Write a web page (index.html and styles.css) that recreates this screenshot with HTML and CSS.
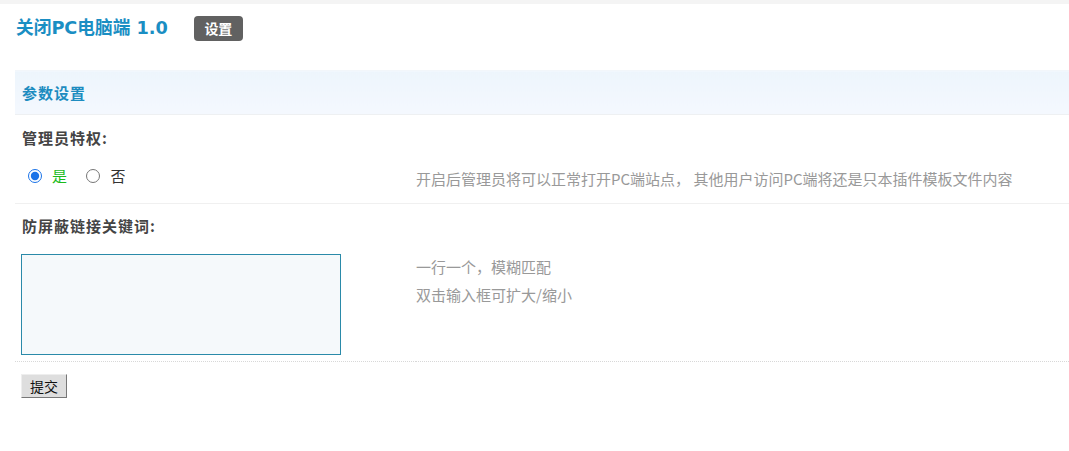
FILE: index.html
```html
<!DOCTYPE html>
<html lang="zh-CN">
<head>
<meta charset="utf-8">
<title>关闭PC电脑端 1.0</title>
<link rel="stylesheet" href="styles.css">
</head>
<body>
<div class="topbar"></div>
<div class="page">
  <div class="titlebar">
    <h3 class="title">关闭PC电脑端 1.0</h3>
    <span class="badge">设置</span>
  </div>
  <form class="form">
    <table class="tb">
      <colgroup><col class="c1"><col></colgroup>
      <tr class="head"><th colspan="2">参数设置</th></tr>
      <tr><td colspan="2" class="label">管理员特权:</td></tr>
      <tr class="val solid">
        <td class="field">
          <label class="radio on"><input type="radio" name="admin" checked> 是</label>
          <label class="radio"><input type="radio" name="admin"> 否</label>
        </td>
        <td class="tips">开启后管理员将可以正常打开PC端站点， 其他用户访问PC端将还是只本插件模板文件内容</td>
      </tr>
      <tr><td colspan="2" class="label label2">防屏蔽链接关键词:</td></tr>
      <tr class="val dotted">
        <td class="field-ta"><textarea class="tarea"></textarea></td>
        <td class="tips tips-top">一行一个，模糊匹配<br>双击输入框可扩大/缩小</td>
      </tr>
      <tr><td colspan="2" class="submit"><button type="button" class="btn">提交</button></td></tr>
    </table>
  </form>
</div>
</body>
</html>
```

FILE: styles.css
```css
html, body {
  margin: 0;
  padding: 0;
  background: #fff;
}
body {
  font-family: "Noto Sans CJK SC", "DejaVu Sans", sans-serif;
  font-size: 15px;
  color: #333;
}
.topbar {
  height: 4px;
  background: #f4f4f4;
}
.page {
  padding-left: 15px;
}
.titlebar {
  display: flex;
  align-items: center;
  height: 48px;
}
.title {
  margin: 0 0 0 1px;
  font-family: "DejaVu Sans", "Noto Sans CJK SC", sans-serif;
  font-size: 17.7px;
  font-weight: 700;
  color: #1a8ec3;
  line-height: 20px;
}
.badge {
  margin-left: 26px;
  width: 49px;
  height: 25px;
  line-height: 25px;
  text-align: center;
  background: #616161;
  color: #fff;
  font-weight: 700;
  font-size: 14px;
  border-radius: 4px;
}
.form {
  margin-top: 18px;
}
.tb {
  width: 100%;
  table-layout: fixed;
  border-collapse: collapse;
}
.tb .c1 {
  width: 401px;
}
.tb td, .tb th {
  padding: 0;
  text-align: left;
  vertical-align: top;
}
.tb .head th {
  height: 43px;
  padding-left: 7px;
  vertical-align: middle;
  background: linear-gradient(#edf5fc, #f4f8fe);
  border-top: 1px solid #f2f6fa;
  border-bottom: 1px solid #eef0f2;
  color: #1d8cc0;
  font-size: 15px;
  letter-spacing: 1px;
  font-weight: 700;
}
.tb .label {
  padding: 13px 0 5px 7px;
  line-height: 20px;
  font-weight: 700;
  letter-spacing: 1px;
  color: #444;
}
.tb .label2 {
  padding-top: 12px;
  padding-bottom: 7px;
}
.val.solid td {
  border-bottom: 1px solid #f0f0f0;
}
.val.dotted td {
  border-bottom: 1px dotted #d8d8d8;
}
.tb .field {
  padding: 13px 0 16px 13px;
  line-height: 20px;
}
.radio {
  display: inline-flex;
  align-items: center;
  margin-right: 16px;
}
.radio input {
  width: 14px;
  height: 14px;
  margin: 0 10px 0 0;
  accent-color: #1a73e8;
}
.radio.on {
  color: #1bbb1b;
}
.tb .tips {
  padding-top: 16px;
  color: #999;
  line-height: 20px;
}
.tb .field-ta {
  padding: 11px 0 6px 6px;
}
.tarea {
  display: block;
  box-sizing: border-box;
  width: 320px;
  height: 101px;
  margin: 0;
  border: 1px solid #2a8aa9;
  background: #f5f9fb;
  resize: none;
}
.tb .tips-top {
  padding-top: 10px;
  line-height: 28px;
}
.tb .submit {
  padding: 12px 0 0 6px;
}
.btn {
  display: block;
  height: 24px;
  width: 46px;
  padding: 0;
  font-family: "Noto Sans CJK SC", sans-serif;
  font-size: 14px;
  color: #111;
  background: #dedede;
  border: 1px solid;
  border-color: #eee #777 #777 #eee;
}
```
